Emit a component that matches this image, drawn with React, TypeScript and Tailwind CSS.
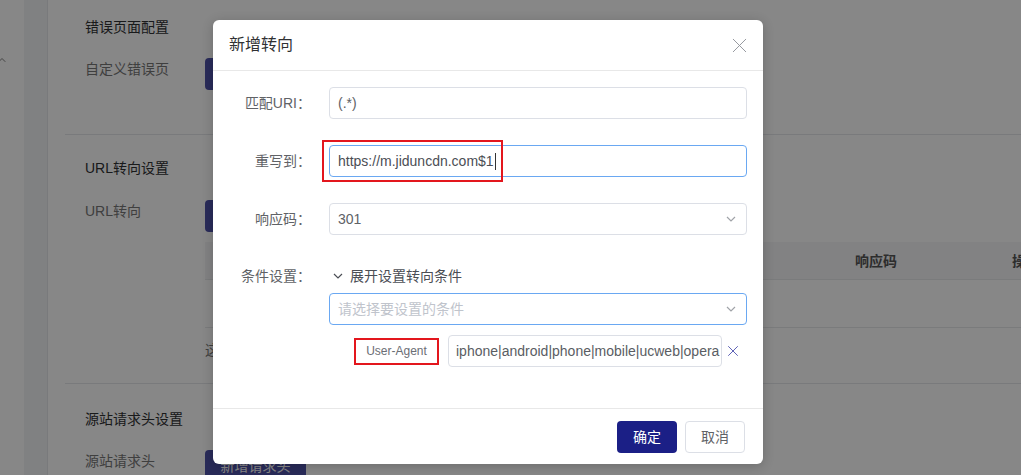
import { ChevronUp, X } from "lucide-react";

const font = "font-['Liberation_Sans','Noto_Sans_CJK_SC',sans-serif]";

const BgButton = ({ label }: { label: string }) => (
    <div className="w-[101px] h-[32px] rounded-[4px] bg-[#4f52a8] text-white text-sm flex items-center justify-center shrink-0">
        {label}
    </div>
);

const Background = () => (
    <div className="flex h-full">
        <div className="w-[24px] bg-white relative">
            <ChevronUp className="absolute -left-[4px] top-[54px] w-[12px] h-[12px] text-[#555]" strokeWidth={1.5} />
        </div>
        <div className="w-[24px] bg-[#f2f3f5] border-r border-[#e4e6ea]" />
        <div className="flex-1 bg-white pl-[17px] overflow-hidden">
            <div className="pl-[20px] pt-[17px]">
                <div className="h-[20px] leading-[20px] text-sm text-[#303133]">错误页面配置</div>
                <div className="flex items-start mt-[21px]">
                    <div className="w-[120px] shrink-0 leading-[22px] text-sm text-[#777]">自定义错误页</div>
                    <BgButton label="新增错误页" />
                </div>
            </div>
            <div className="mt-[44px] border-t border-[#e4e6ea]" />
            <div className="pl-[20px] pt-[23px]">
                <div className="h-[20px] leading-[20px] text-sm text-[#303133]">URL转向设置</div>
                <div className="flex items-start mt-[22px]">
                    <div className="w-[120px] shrink-0 leading-[22px] text-sm text-[#777]">URL转向</div>
                    <div className="w-[876px] shrink-0">
                        <BgButton label="新增转向" />
                        <div className="mt-[10px] h-[38px] bg-[#f5f6f8] border-b border-[#e6e8eb] flex items-center text-sm font-bold text-[#555]">
                            <div className="flex-1" />
                            <div className="w-[157px]">响应码</div>
                            <div className="w-[69px]">操作</div>
                        </div>
                        <div className="h-[48px] border-b border-[#e6e8eb]" />
                        <div className="h-[44px] flex items-center text-sm text-[#777]">这里配置的URL转向规则会依次生效</div>
                    </div>
                </div>
            </div>
            <div className="mt-[11px] border-t border-[#e4e6ea]" />
            <div className="pl-[20px] pt-[25px]">
                <div className="h-[20px] leading-[20px] text-sm text-[#303133]">源站请求头设置</div>
                <div className="flex items-start mt-[21px]">
                    <div className="w-[120px] shrink-0 leading-[22px] text-sm text-[#777]">源站请求头</div>
                    <BgButton label="新增请求头" />
                </div>
            </div>
        </div>
    </div>
);

const Caret = ({ color }: { color: string }) => (
    <svg width="10" height="6" viewBox="0 0 10 6" fill="none">
        <path d="M1 1l4 4 4-4" stroke={color} strokeWidth="1.2" />
    </svg>
);

const Row = ({ label, children }: { label: string; children: React.ReactNode }) => (
    <div className="flex items-center">
        <div className="w-[88px] pr-[6px] text-right text-sm text-[#606266] shrink-0">{label}：</div>
        <div className="ml-[12px] flex-1">{children}</div>
    </div>
);

const Dialog = () => (
    <div className="absolute left-[213px] top-[20px] w-[550px] h-[444px] rounded-[6px] bg-white shadow-[0_2px_12px_rgba(0,0,0,0.2)] flex flex-col">
        <div className="h-[51px] border-b border-[#e8e8e8] flex items-center justify-between pl-[16px] pr-[11px]">
            <span className="text-base text-[#303133]">新增转向</span>
            <X className="w-[25px] h-[25px] text-[#909399]" strokeWidth={0.9} />
        </div>
        <div className="flex-1 pl-[16px] pr-[16px] pt-[16px]">
            <Row label="匹配URI">
                <div className="h-[32px] border border-[#dcdfe6] rounded-[4px] flex items-center px-[8px] text-sm text-[#606266]">(.*)</div>
            </Row>
            <div className="mt-[26px]">
                <Row label="重写到">
                    <div className="h-[32px] border border-[#6aa8f2] rounded-[4px] flex items-center px-[8px] text-sm text-[#4b4e55]">
                        https://m.jiduncdn.com$1
                        <span className="w-px h-[17px] bg-[#333] ml-[1px]" />
                    </div>
                </Row>
            </div>
            <div className="mt-[26px]">
                <Row label="响应码">
                    <div className="h-[32px] border border-[#dcdfe6] rounded-[4px] flex items-center justify-between pl-[8px] pr-[10px] text-sm text-[#606266]">
                        301
                        <Caret color="#a0a3a8" />
                    </div>
                </Row>
            </div>
            <div className="mt-[30px]">
                <Row label="条件设置">
                    <div className="flex items-center gap-[7px] pl-[4px] text-sm text-[#4b4e55] h-[22px]">
                        <Caret color="#4b4e55" />
                        展开设置转向条件
                    </div>
                </Row>
            </div>
            <div className="mt-[6px] ml-[100px] h-[32px] border border-[#6aa8f2] rounded-[4px] flex items-center justify-between pl-[8px] pr-[10px] text-sm text-[#c0c4cc]">
                请选择要设置的条件
                <Caret color="#a0a3a8" />
            </div>
            <div className="mt-[10px] ml-[125px] flex items-center">
                <div className="w-[85px] h-[27px] border-2 border-[#e3161d] flex items-center justify-center text-xs text-[#6b6e75]">
                    User-Agent
                </div>
                <div className="ml-[9px] w-[274px] h-[32px] border border-[#dcdfe6] rounded-[4px] flex items-center px-[7px] text-sm text-[#5a5d63] overflow-hidden whitespace-nowrap">
                    iphone|android|phone|mobile|ucweb|opera
                </div>
                <X className="ml-[2px] w-[18px] h-[18px] text-[#5a5fb5]" strokeWidth={1.3} />
            </div>
        </div>
        <div className="h-[56px] border-t border-[#e8e8e8] flex items-start justify-end gap-[8px] pt-[12px] pr-[18px]">
            <div className="w-[60px] h-[32px] rounded-[4px] bg-[#1b1f86] text-white text-sm flex items-center justify-center">确定</div>
            <div className="w-[60px] h-[32px] rounded-[4px] border border-[#dcdfe6] text-[#606266] text-sm flex items-center justify-center">取消</div>
        </div>
        <div className="absolute left-[109px] top-[120px] w-[181px] h-[42px] border-2 border-[#e3161d] pointer-events-none" />
    </div>
);

export default function App() {
    return (
        <div className={`relative w-[1021px] h-[475px] overflow-hidden ${font}`}>
            <Background />
            <div className="absolute inset-0 bg-black/[0.47]" />
            <Dialog />
        </div>
    );
}
